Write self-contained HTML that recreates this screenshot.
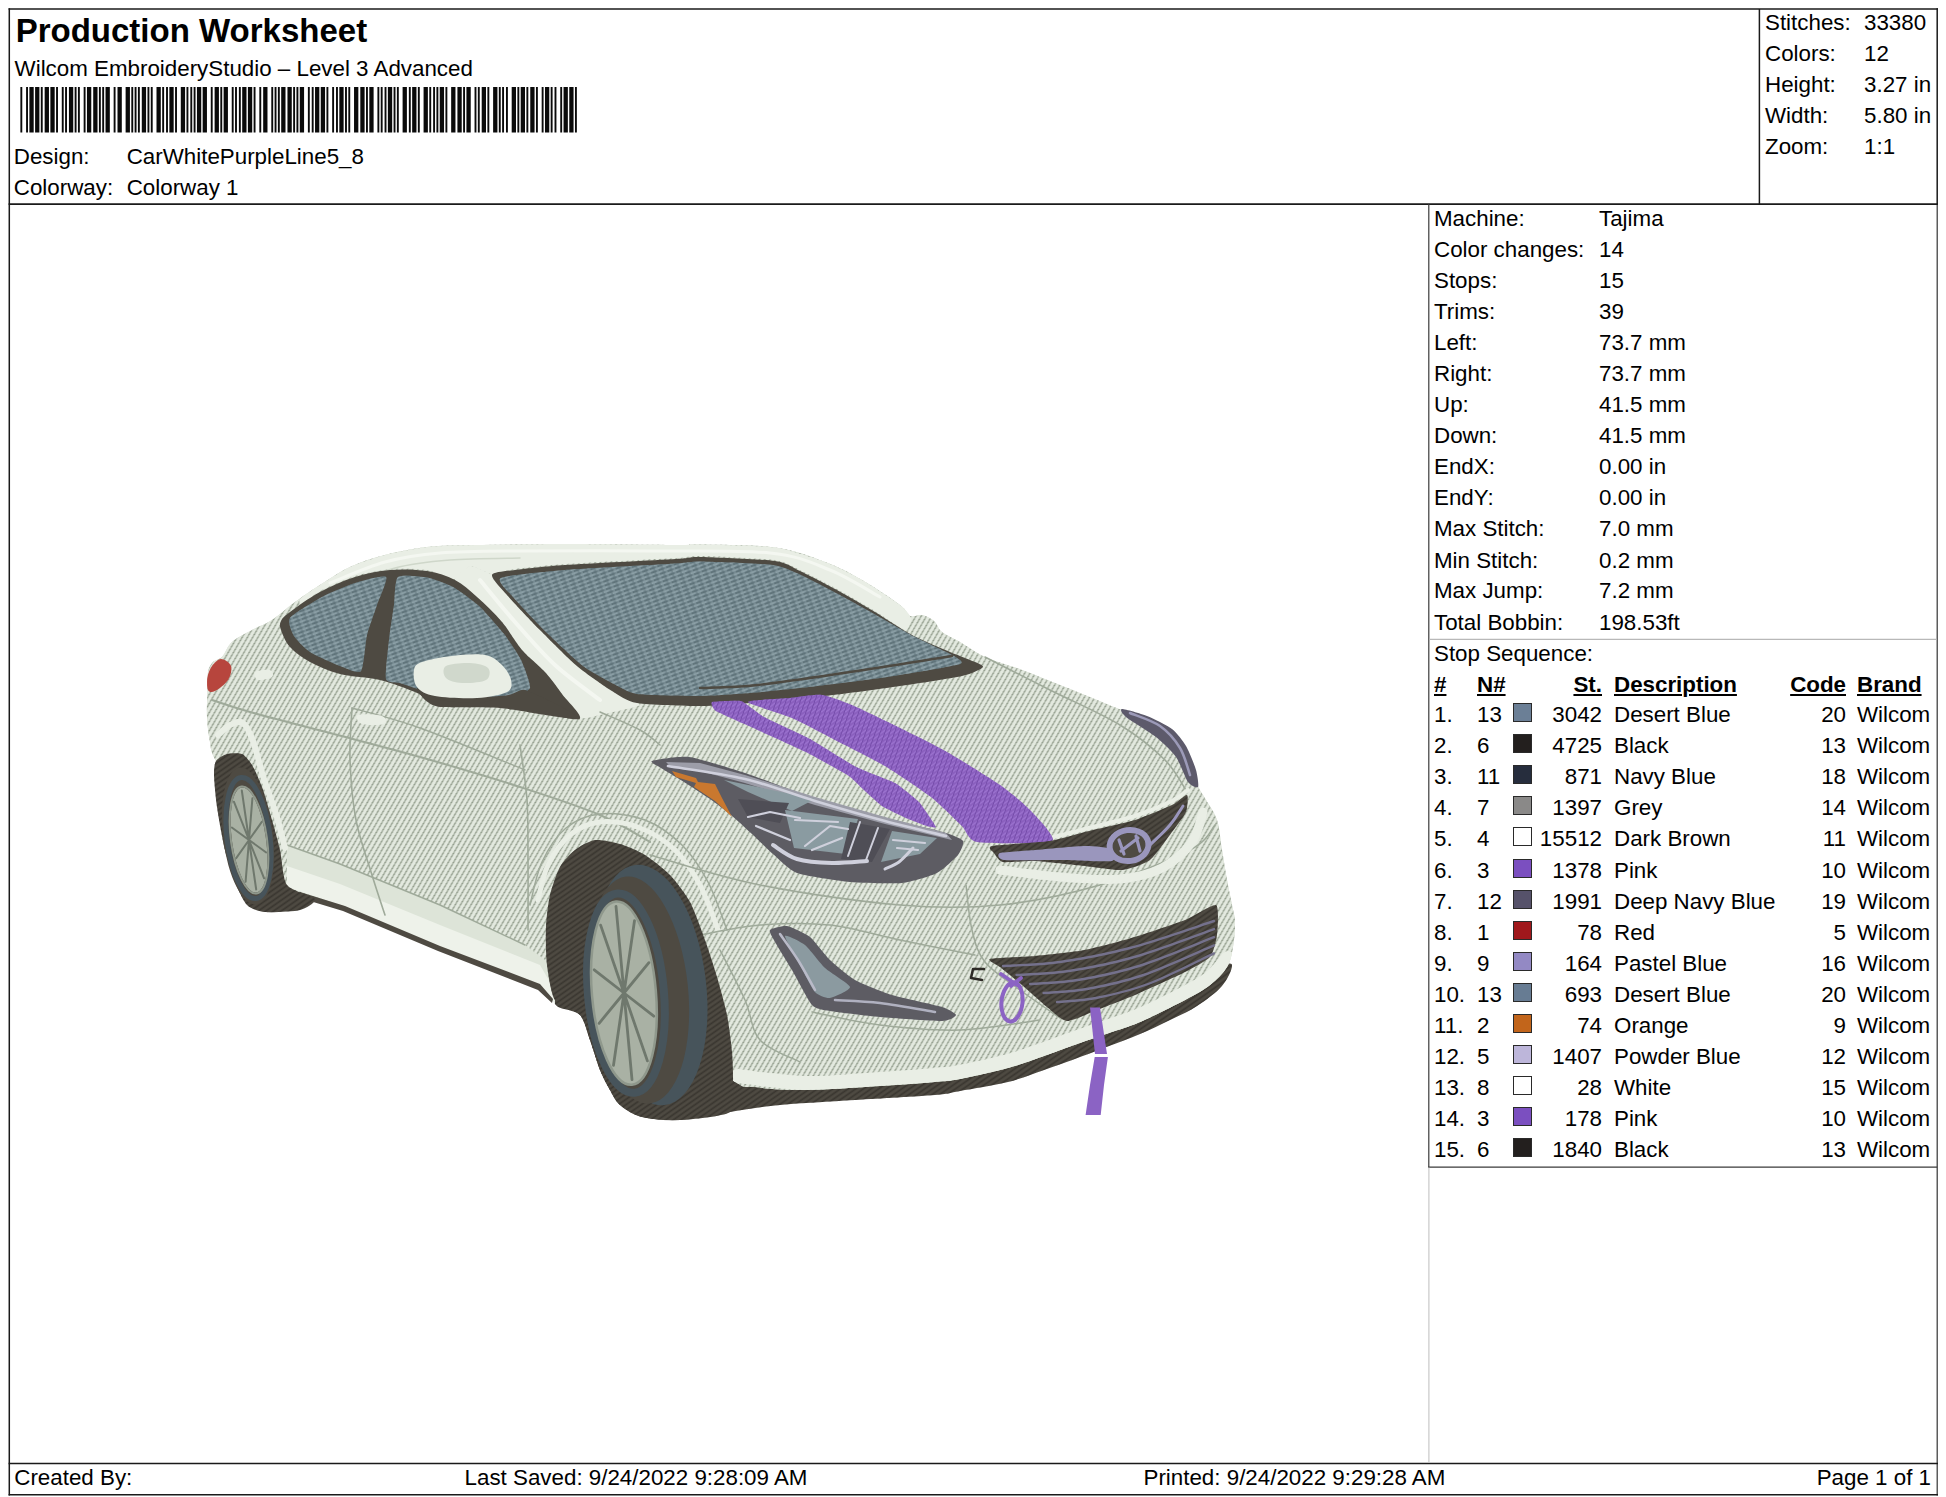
<!DOCTYPE html><html><head><meta charset="utf-8"><title>Production Worksheet</title><style>
html,body{margin:0;padding:0;background:#fff;}
body{width:1946px;height:1497px;position:relative;overflow:hidden;font-family:"Liberation Sans",Arial,sans-serif;color:#000;font-size:22.35px;}
.l{position:absolute;background:#222;}
.g{position:absolute;background:#c8c8c8;}
.t{position:absolute;white-space:nowrap;line-height:24px;height:24px;}
.r{text-align:right;}
.b{font-weight:bold;text-decoration:underline;text-decoration-thickness:2px;text-underline-offset:2px;}
.sw{position:absolute;width:17.6px;height:17px;border:1px solid #2a2a2a;}
</style></head><body>
<svg style="position:absolute;left:0;top:0" width="1946" height="1497" viewBox="0 0 1946 1497"><line x1="8.6" y1="9" x2="1938" y2="9" stroke="#1a1a1a" stroke-width="1.5"/><line x1="9.3" y1="8.3" x2="9.3" y2="1495.4" stroke="#1a1a1a" stroke-width="1.5"/><line x1="1937.2" y1="8.3" x2="1937.2" y2="204.1" stroke="#1a1a1a" stroke-width="1.5"/><line x1="1937.2" y1="204.1" x2="1937.2" y2="1495.4" stroke="#333" stroke-width="1.2"/><line x1="8.6" y1="1494.7" x2="1938" y2="1494.7" stroke="#1a1a1a" stroke-width="1.5"/><line x1="8.6" y1="204.1" x2="1938" y2="204.1" stroke="#1a1a1a" stroke-width="1.6"/><line x1="1759.4" y1="9" x2="1759.4" y2="204.1" stroke="#1a1a1a" stroke-width="1.5"/><line x1="8.6" y1="1463.5" x2="1938" y2="1463.5" stroke="#1a1a1a" stroke-width="1.6"/><line x1="1428.8" y1="204.1" x2="1428.8" y2="1167.6" stroke="#3a3a3a" stroke-width="1.2"/><line x1="1428.2" y1="1167.1" x2="1937.2" y2="1167.1" stroke="#3a3a3a" stroke-width="1.2"/><line x1="1428.9" y1="1167.6" x2="1428.9" y2="1463" stroke="#c4c4c4" stroke-width="1.1"/><line x1="1429.4" y1="639.4" x2="1936.6" y2="639.4" stroke="#b8b8b8" stroke-width="1.1"/></svg>
<div class="t" style="left:15.7px;top:12.6px;font-size:33px;font-weight:bold;line-height:36px;height:36px">Production Worksheet</div>
<div class="t " style="left:14.6px;top:56.6px;">Wilcom EmbroideryStudio – Level 3 Advanced</div>
<svg style="position:absolute;left:0;top:86.7px" width="600" height="46" viewBox="0 0 600 46" fill="#0a0a0a"><rect x="20.38" y="0" width="1.89" height="45.5"/><rect x="26.09" y="0" width="1.89" height="45.5"/><rect x="29.39" y="0" width="4.30" height="45.5"/><rect x="35.10" y="0" width="4.30" height="45.5"/><rect x="40.81" y="0" width="1.89" height="45.5"/><rect x="44.66" y="0" width="4.30" height="45.5"/><rect x="50.37" y="0" width="4.30" height="45.5"/><rect x="56.08" y="0" width="1.89" height="45.5"/><rect x="61.79" y="0" width="1.89" height="45.5"/><rect x="65.09" y="0" width="1.89" height="45.5"/><rect x="68.94" y="0" width="4.30" height="45.5"/><rect x="74.65" y="0" width="1.89" height="45.5"/><rect x="77.95" y="0" width="1.89" height="45.5"/><rect x="83.66" y="0" width="1.89" height="45.5"/><rect x="86.96" y="0" width="4.30" height="45.5"/><rect x="93.22" y="0" width="4.30" height="45.5"/><rect x="98.93" y="0" width="1.89" height="45.5"/><rect x="102.23" y="0" width="1.89" height="45.5"/><rect x="105.53" y="0" width="4.30" height="45.5"/><rect x="113.65" y="0" width="1.89" height="45.5"/><rect x="117.50" y="0" width="4.30" height="45.5"/><rect x="125.62" y="0" width="4.30" height="45.5"/><rect x="131.33" y="0" width="1.89" height="45.5"/><rect x="134.63" y="0" width="1.89" height="45.5"/><rect x="137.93" y="0" width="1.89" height="45.5"/><rect x="141.78" y="0" width="4.30" height="45.5"/><rect x="147.49" y="0" width="1.89" height="45.5"/><rect x="150.79" y="0" width="1.89" height="45.5"/><rect x="156.50" y="0" width="4.30" height="45.5"/><rect x="162.21" y="0" width="1.89" height="45.5"/><rect x="166.06" y="0" width="1.89" height="45.5"/><rect x="169.36" y="0" width="4.30" height="45.5"/><rect x="175.07" y="0" width="1.89" height="45.5"/><rect x="180.78" y="0" width="4.30" height="45.5"/><rect x="186.49" y="0" width="1.89" height="45.5"/><rect x="190.34" y="0" width="1.89" height="45.5"/><rect x="193.64" y="0" width="1.89" height="45.5"/><rect x="196.94" y="0" width="4.30" height="45.5"/><rect x="202.65" y="0" width="4.30" height="45.5"/><rect x="210.77" y="0" width="1.89" height="45.5"/><rect x="214.62" y="0" width="4.30" height="45.5"/><rect x="220.33" y="0" width="1.89" height="45.5"/><rect x="223.63" y="0" width="4.30" height="45.5"/><rect x="231.75" y="0" width="1.89" height="45.5"/><rect x="235.05" y="0" width="1.89" height="45.5"/><rect x="238.90" y="0" width="1.89" height="45.5"/><rect x="242.20" y="0" width="4.30" height="45.5"/><rect x="247.91" y="0" width="4.30" height="45.5"/><rect x="253.62" y="0" width="1.89" height="45.5"/><rect x="259.33" y="0" width="1.89" height="45.5"/><rect x="263.18" y="0" width="4.30" height="45.5"/><rect x="271.30" y="0" width="1.89" height="45.5"/><rect x="274.60" y="0" width="1.89" height="45.5"/><rect x="277.90" y="0" width="1.89" height="45.5"/><rect x="281.20" y="0" width="4.30" height="45.5"/><rect x="287.46" y="0" width="4.30" height="45.5"/><rect x="293.17" y="0" width="1.89" height="45.5"/><rect x="296.47" y="0" width="1.89" height="45.5"/><rect x="299.77" y="0" width="4.30" height="45.5"/><rect x="307.89" y="0" width="1.89" height="45.5"/><rect x="311.74" y="0" width="1.89" height="45.5"/><rect x="315.04" y="0" width="4.30" height="45.5"/><rect x="320.75" y="0" width="4.30" height="45.5"/><rect x="326.46" y="0" width="1.89" height="45.5"/><rect x="332.17" y="0" width="1.89" height="45.5"/><rect x="336.02" y="0" width="1.89" height="45.5"/><rect x="339.32" y="0" width="4.30" height="45.5"/><rect x="345.03" y="0" width="1.89" height="45.5"/><rect x="348.33" y="0" width="1.89" height="45.5"/><rect x="354.04" y="0" width="4.30" height="45.5"/><rect x="360.30" y="0" width="4.30" height="45.5"/><rect x="366.01" y="0" width="1.89" height="45.5"/><rect x="369.31" y="0" width="4.30" height="45.5"/><rect x="377.43" y="0" width="1.89" height="45.5"/><rect x="380.73" y="0" width="1.89" height="45.5"/><rect x="384.58" y="0" width="1.89" height="45.5"/><rect x="387.88" y="0" width="4.30" height="45.5"/><rect x="393.59" y="0" width="1.89" height="45.5"/><rect x="396.89" y="0" width="1.89" height="45.5"/><rect x="402.60" y="0" width="4.30" height="45.5"/><rect x="408.86" y="0" width="1.89" height="45.5"/><rect x="412.16" y="0" width="4.30" height="45.5"/><rect x="417.87" y="0" width="1.89" height="45.5"/><rect x="423.58" y="0" width="4.30" height="45.5"/><rect x="429.29" y="0" width="1.89" height="45.5"/><rect x="433.14" y="0" width="1.89" height="45.5"/><rect x="436.44" y="0" width="1.89" height="45.5"/><rect x="439.74" y="0" width="4.30" height="45.5"/><rect x="445.45" y="0" width="1.89" height="45.5"/><rect x="451.16" y="0" width="4.30" height="45.5"/><rect x="457.42" y="0" width="4.30" height="45.5"/><rect x="463.13" y="0" width="1.89" height="45.5"/><rect x="466.43" y="0" width="4.30" height="45.5"/><rect x="474.55" y="0" width="1.89" height="45.5"/><rect x="477.85" y="0" width="1.89" height="45.5"/><rect x="481.70" y="0" width="4.30" height="45.5"/><rect x="487.41" y="0" width="1.89" height="45.5"/><rect x="493.12" y="0" width="4.30" height="45.5"/><rect x="498.83" y="0" width="1.89" height="45.5"/><rect x="502.13" y="0" width="1.89" height="45.5"/><rect x="505.98" y="0" width="1.89" height="45.5"/><rect x="511.69" y="0" width="4.30" height="45.5"/><rect x="517.40" y="0" width="1.89" height="45.5"/><rect x="520.70" y="0" width="4.30" height="45.5"/><rect x="526.41" y="0" width="1.89" height="45.5"/><rect x="530.26" y="0" width="4.30" height="45.5"/><rect x="535.97" y="0" width="1.89" height="45.5"/><rect x="541.68" y="0" width="1.89" height="45.5"/><rect x="544.98" y="0" width="4.30" height="45.5"/><rect x="550.69" y="0" width="1.89" height="45.5"/><rect x="554.54" y="0" width="1.89" height="45.5"/><rect x="560.25" y="0" width="1.89" height="45.5"/><rect x="563.55" y="0" width="4.30" height="45.5"/><rect x="569.26" y="0" width="4.30" height="45.5"/><rect x="574.97" y="0" width="1.89" height="45.5"/></svg>
<div class="t " style="left:13.8px;top:144.6px;">Design:</div>
<div class="t " style="left:126.7px;top:144.6px;">CarWhitePurpleLine5_8</div>
<div class="t " style="left:13.8px;top:175.6px;">Colorway:</div>
<div class="t " style="left:126.7px;top:175.6px;">Colorway 1</div>
<div class="t " style="left:1765px;top:10.6px;">Stitches:</div>
<div class="t " style="left:1864px;top:10.6px;">33380</div>
<div class="t " style="left:1765px;top:41.6px;">Colors:</div>
<div class="t " style="left:1864px;top:41.6px;">12</div>
<div class="t " style="left:1765px;top:72.6px;">Height:</div>
<div class="t " style="left:1864px;top:72.6px;">3.27 in</div>
<div class="t " style="left:1765px;top:103.6px;">Width:</div>
<div class="t " style="left:1864px;top:103.6px;">5.80 in</div>
<div class="t " style="left:1765px;top:134.6px;">Zoom:</div>
<div class="t " style="left:1864px;top:134.6px;">1:1</div>
<div class="t " style="left:1434px;top:206.6px;">Machine:</div>
<div class="t " style="left:1599px;top:206.6px;">Tajima</div>
<div class="t " style="left:1434px;top:237.6px;">Color changes:</div>
<div class="t " style="left:1599px;top:237.6px;">14</div>
<div class="t " style="left:1434px;top:268.6px;">Stops:</div>
<div class="t " style="left:1599px;top:268.6px;">15</div>
<div class="t " style="left:1434px;top:299.6px;">Trims:</div>
<div class="t " style="left:1599px;top:299.6px;">39</div>
<div class="t " style="left:1434px;top:330.6px;">Left:</div>
<div class="t " style="left:1599px;top:330.6px;">73.7 mm</div>
<div class="t " style="left:1434px;top:361.6px;">Right:</div>
<div class="t " style="left:1599px;top:361.6px;">73.7 mm</div>
<div class="t " style="left:1434px;top:392.6px;">Up:</div>
<div class="t " style="left:1599px;top:392.6px;">41.5 mm</div>
<div class="t " style="left:1434px;top:423.6px;">Down:</div>
<div class="t " style="left:1599px;top:423.6px;">41.5 mm</div>
<div class="t " style="left:1434px;top:454.6px;">EndX:</div>
<div class="t " style="left:1599px;top:454.6px;">0.00 in</div>
<div class="t " style="left:1434px;top:485.6px;">EndY:</div>
<div class="t " style="left:1599px;top:485.6px;">0.00 in</div>
<div class="t " style="left:1434px;top:516.6px;">Max Stitch:</div>
<div class="t " style="left:1599px;top:516.6px;">7.0 mm</div>
<div class="t " style="left:1434px;top:548.6px;">Min Stitch:</div>
<div class="t " style="left:1599px;top:548.6px;">0.2 mm</div>
<div class="t " style="left:1434px;top:578.6px;">Max Jump:</div>
<div class="t " style="left:1599px;top:578.6px;">7.2 mm</div>
<div class="t " style="left:1434px;top:610.6px;">Total Bobbin:</div>
<div class="t " style="left:1599px;top:610.6px;">198.53ft</div>
<div class="t " style="left:1434px;top:641.6px;">Stop Sequence:</div>
<div class="t b" style="left:1434px;top:672.6px;">#</div>
<div class="t b" style="left:1477px;top:672.6px;">N#</div>
<div class="t r b" style="right:344px;top:672.6px;">St.</div>
<div class="t b" style="left:1614px;top:672.6px;">Description</div>
<div class="t r b" style="right:100px;top:672.6px;">Code</div>
<div class="t b" style="left:1857px;top:672.6px;">Brand</div>
<div class="t " style="left:1434px;top:702.6px;">1.</div>
<div class="t " style="left:1477px;top:702.6px;">13</div>
<div class="sw" style="left:1512.7px;top:702.7px;background:#6b7f96"></div>
<div class="t r " style="right:344px;top:702.6px;">3042</div>
<div class="t " style="left:1614px;top:702.6px;">Desert Blue</div>
<div class="t r " style="right:100px;top:702.6px;">20</div>
<div class="t " style="left:1857px;top:702.6px;">Wilcom</div>
<div class="t " style="left:1434px;top:733.6px;">2.</div>
<div class="t " style="left:1477px;top:733.6px;">6</div>
<div class="sw" style="left:1512.7px;top:733.7px;background:#231f1e"></div>
<div class="t r " style="right:344px;top:733.6px;">4725</div>
<div class="t " style="left:1614px;top:733.6px;">Black</div>
<div class="t r " style="right:100px;top:733.6px;">13</div>
<div class="t " style="left:1857px;top:733.6px;">Wilcom</div>
<div class="t " style="left:1434px;top:764.6px;">3.</div>
<div class="t " style="left:1477px;top:764.6px;">11</div>
<div class="sw" style="left:1512.7px;top:764.7px;background:#262d3d"></div>
<div class="t r " style="right:344px;top:764.6px;">871</div>
<div class="t " style="left:1614px;top:764.6px;">Navy Blue</div>
<div class="t r " style="right:100px;top:764.6px;">18</div>
<div class="t " style="left:1857px;top:764.6px;">Wilcom</div>
<div class="t " style="left:1434px;top:795.6px;">4.</div>
<div class="t " style="left:1477px;top:795.6px;">7</div>
<div class="sw" style="left:1512.7px;top:795.7px;background:#8a8988"></div>
<div class="t r " style="right:344px;top:795.6px;">1397</div>
<div class="t " style="left:1614px;top:795.6px;">Grey</div>
<div class="t r " style="right:100px;top:795.6px;">14</div>
<div class="t " style="left:1857px;top:795.6px;">Wilcom</div>
<div class="t " style="left:1434px;top:826.6px;">5.</div>
<div class="t " style="left:1477px;top:826.6px;">4</div>
<div class="sw" style="left:1512.7px;top:826.7px;background:#ffffff"></div>
<div class="t r " style="right:344px;top:826.6px;">15512</div>
<div class="t " style="left:1614px;top:826.6px;">Dark Brown</div>
<div class="t r " style="right:100px;top:826.6px;">11</div>
<div class="t " style="left:1857px;top:826.6px;">Wilcom</div>
<div class="t " style="left:1434px;top:858.6px;">6.</div>
<div class="t " style="left:1477px;top:858.6px;">3</div>
<div class="sw" style="left:1512.7px;top:858.7px;background:#7b4fc0"></div>
<div class="t r " style="right:344px;top:858.6px;">1378</div>
<div class="t " style="left:1614px;top:858.6px;">Pink</div>
<div class="t r " style="right:100px;top:858.6px;">10</div>
<div class="t " style="left:1857px;top:858.6px;">Wilcom</div>
<div class="t " style="left:1434px;top:889.6px;">7.</div>
<div class="t " style="left:1477px;top:889.6px;">12</div>
<div class="sw" style="left:1512.7px;top:889.7px;background:#56526a"></div>
<div class="t r " style="right:344px;top:889.6px;">1991</div>
<div class="t " style="left:1614px;top:889.6px;">Deep Navy Blue</div>
<div class="t r " style="right:100px;top:889.6px;">19</div>
<div class="t " style="left:1857px;top:889.6px;">Wilcom</div>
<div class="t " style="left:1434px;top:920.6px;">8.</div>
<div class="t " style="left:1477px;top:920.6px;">1</div>
<div class="sw" style="left:1512.7px;top:920.7px;background:#a0181c"></div>
<div class="t r " style="right:344px;top:920.6px;">78</div>
<div class="t " style="left:1614px;top:920.6px;">Red</div>
<div class="t r " style="right:100px;top:920.6px;">5</div>
<div class="t " style="left:1857px;top:920.6px;">Wilcom</div>
<div class="t " style="left:1434px;top:951.6px;">9.</div>
<div class="t " style="left:1477px;top:951.6px;">9</div>
<div class="sw" style="left:1512.7px;top:951.7px;background:#9389c4"></div>
<div class="t r " style="right:344px;top:951.6px;">164</div>
<div class="t " style="left:1614px;top:951.6px;">Pastel Blue</div>
<div class="t r " style="right:100px;top:951.6px;">16</div>
<div class="t " style="left:1857px;top:951.6px;">Wilcom</div>
<div class="t " style="left:1434px;top:982.6px;">10.</div>
<div class="t " style="left:1477px;top:982.6px;">13</div>
<div class="sw" style="left:1512.7px;top:982.7px;background:#677c93"></div>
<div class="t r " style="right:344px;top:982.6px;">693</div>
<div class="t " style="left:1614px;top:982.6px;">Desert Blue</div>
<div class="t r " style="right:100px;top:982.6px;">20</div>
<div class="t " style="left:1857px;top:982.6px;">Wilcom</div>
<div class="t " style="left:1434px;top:1013.6px;">11.</div>
<div class="t " style="left:1477px;top:1013.6px;">2</div>
<div class="sw" style="left:1512.7px;top:1013.7px;background:#c2651b"></div>
<div class="t r " style="right:344px;top:1013.6px;">74</div>
<div class="t " style="left:1614px;top:1013.6px;">Orange</div>
<div class="t r " style="right:100px;top:1013.6px;">9</div>
<div class="t " style="left:1857px;top:1013.6px;">Wilcom</div>
<div class="t " style="left:1434px;top:1044.6px;">12.</div>
<div class="t " style="left:1477px;top:1044.6px;">5</div>
<div class="sw" style="left:1512.7px;top:1044.7px;background:#bdb6da"></div>
<div class="t r " style="right:344px;top:1044.6px;">1407</div>
<div class="t " style="left:1614px;top:1044.6px;">Powder Blue</div>
<div class="t r " style="right:100px;top:1044.6px;">12</div>
<div class="t " style="left:1857px;top:1044.6px;">Wilcom</div>
<div class="t " style="left:1434px;top:1075.6px;">13.</div>
<div class="t " style="left:1477px;top:1075.6px;">8</div>
<div class="sw" style="left:1512.7px;top:1075.7px;background:#ffffff"></div>
<div class="t r " style="right:344px;top:1075.6px;">28</div>
<div class="t " style="left:1614px;top:1075.6px;">White</div>
<div class="t r " style="right:100px;top:1075.6px;">15</div>
<div class="t " style="left:1857px;top:1075.6px;">Wilcom</div>
<div class="t " style="left:1434px;top:1106.6px;">14.</div>
<div class="t " style="left:1477px;top:1106.6px;">3</div>
<div class="sw" style="left:1512.7px;top:1106.7px;background:#7b4fc0"></div>
<div class="t r " style="right:344px;top:1106.6px;">178</div>
<div class="t " style="left:1614px;top:1106.6px;">Pink</div>
<div class="t r " style="right:100px;top:1106.6px;">10</div>
<div class="t " style="left:1857px;top:1106.6px;">Wilcom</div>
<div class="t " style="left:1434px;top:1137.6px;">15.</div>
<div class="t " style="left:1477px;top:1137.6px;">6</div>
<div class="sw" style="left:1512.7px;top:1137.7px;background:#231f1e"></div>
<div class="t r " style="right:344px;top:1137.6px;">1840</div>
<div class="t " style="left:1614px;top:1137.6px;">Black</div>
<div class="t r " style="right:100px;top:1137.6px;">13</div>
<div class="t " style="left:1857px;top:1137.6px;">Wilcom</div>
<div class="t " style="left:14.3px;top:1465.6px;">Created By:</div>
<div class="t " style="left:464.6px;top:1465.6px;">Last Saved: 9/24/2022 9:28:09 AM</div>
<div class="t " style="left:1143.5px;top:1465.6px;">Printed: 9/24/2022 9:29:28 AM</div>
<div class="t r " style="right:15px;top:1465.6px;">Page 1 of 1</div>
<svg style="position:absolute;left:0;top:0" width="1946" height="1497" viewBox="0 0 1946 1497">
<defs>
<pattern id="st" width="5.25" height="6" patternUnits="userSpaceOnUse" patternTransform="skewX(-30)"><rect width="5.25" height="6" fill="#e3e9df"/><rect x="0.4" width="1.6" height="6" fill="#b0baab"/><circle cx="1.2" cy="1.5" r="0.9" fill="#929c8c"/><circle cx="1.2" cy="4.5" r="0.9" fill="#929c8c"/></pattern>
<pattern id="gl" width="8" height="4" patternUnits="userSpaceOnUse" patternTransform="rotate(-20)"><path d="M0,1.1 L8,1.1" stroke="#52666d" stroke-width="1.5" stroke-dasharray="5.6 2.4"/><path d="M0,3.1 L8,3.1" stroke="#9cb0b6" stroke-width="1.1" stroke-dasharray="5.6 2.4" stroke-dashoffset="3"/></pattern>
<pattern id="dk" width="5.5" height="4.4" patternUnits="userSpaceOnUse" patternTransform="rotate(-35)"><path d="M0,1.2 L5.5,1.2" stroke="#25221e" stroke-width="1.7"/></pattern>
<pattern id="pu" width="4.8" height="5.4" patternUnits="userSpaceOnUse" patternTransform="skewX(-20)"><path d="M0.6,4.4 L3.8,1.0" stroke="#a27ad6" stroke-width="1.5" stroke-linecap="round"/><path d="M4.4,0 L4.4,5.4" stroke="#6a429f" stroke-width="1.0"/></pattern>
<clipPath id="bodyclip"><path d="M222.0,657.0 C225.2,653.7 227.0,646.5 232.0,642.0 C237.0,637.5 245.3,633.7 252.0,630.0 C258.7,626.3 264.8,624.7 272.0,620.0 C279.2,615.3 287.0,607.8 295.0,602.0 C303.0,596.2 310.8,590.8 320.0,585.0 C329.2,579.2 339.2,572.0 350.0,567.0 C360.8,562.0 372.2,558.3 385.0,555.0 C397.8,551.7 411.7,548.7 427.0,547.0 C442.3,545.3 454.0,545.5 477.0,545.0 C500.0,544.5 531.8,544.0 565.0,544.0 C598.2,544.0 653.5,544.9 676.0,545.0 C698.5,545.1 683.5,544.1 700.0,544.5 C716.5,544.9 754.2,544.6 775.0,547.5 C795.8,550.4 810.5,556.6 825.0,562.0 C839.5,567.4 849.5,572.8 862.0,580.0 C874.5,587.2 892.0,599.0 900.0,605.0 C908.0,611.0 906.3,614.3 910.0,616.0 C913.7,617.7 918.0,614.2 922.0,615.0 C926.0,615.8 930.7,618.2 934.0,621.0 C937.3,623.8 937.7,628.5 942.0,632.0 C946.3,635.5 952.8,637.8 960.0,642.0 C967.2,646.2 974.7,652.3 985.0,657.0 C995.3,661.7 1009.5,665.3 1022.0,670.0 C1034.5,674.7 1047.5,680.0 1060.0,685.0 C1072.5,690.0 1086.7,695.8 1097.0,700.0 C1107.3,704.2 1113.7,707.2 1122.0,710.0 C1130.3,712.8 1138.7,713.7 1147.0,717.0 C1155.3,720.3 1165.7,725.0 1172.0,730.0 C1178.3,735.0 1181.2,740.3 1185.0,747.0 C1188.8,753.7 1192.8,763.5 1195.0,770.0 C1197.2,776.5 1196.2,781.0 1198.0,786.0 C1199.8,791.0 1202.8,794.3 1206.0,800.0 C1209.2,805.7 1214.3,811.7 1217.0,820.0 C1219.7,828.3 1220.3,840.0 1222.0,850.0 C1223.7,860.0 1225.3,870.8 1227.0,880.0 C1228.7,889.2 1230.7,898.0 1232.0,905.0 C1233.3,912.0 1234.8,915.0 1235.0,922.0 C1235.2,929.0 1234.3,939.5 1233.0,947.0 C1231.7,954.5 1230.8,960.7 1227.0,967.0 C1223.2,973.3 1217.0,979.5 1210.0,985.0 C1203.0,990.5 1196.7,993.8 1185.0,1000.0 C1173.3,1006.2 1152.7,1016.5 1140.0,1022.0 C1127.3,1027.5 1119.0,1029.5 1109.0,1033.0 C1099.0,1036.5 1090.8,1039.2 1080.0,1043.0 C1069.2,1046.8 1056.0,1051.8 1044.0,1056.0 C1032.0,1060.2 1022.0,1064.2 1008.0,1068.0 C994.0,1071.8 972.2,1076.7 960.0,1079.0 C947.8,1081.3 948.3,1080.8 935.0,1082.0 C921.7,1083.2 901.7,1084.7 880.0,1086.0 C858.3,1087.3 825.8,1089.8 805.0,1090.0 C784.2,1090.2 767.2,1088.7 755.0,1087.0 C742.8,1085.3 749.5,1091.2 732.0,1080.0 C714.5,1068.8 677.0,1035.0 650.0,1020.0 C623.0,1005.0 586.2,993.2 570.0,990.0 C553.8,986.8 558.0,1001.8 553.0,1001.0 C548.0,1000.2 550.5,990.7 540.0,985.0 C529.5,979.3 506.7,973.3 490.0,967.0 C473.3,960.7 456.7,953.7 440.0,947.0 C423.3,940.3 406.7,934.0 390.0,927.0 C373.3,920.0 357.2,911.7 340.0,905.0 C322.8,898.3 302.0,901.2 287.0,887.0 C272.0,872.8 261.8,841.0 250.0,820.0 C238.2,799.0 222.7,774.0 216.0,761.0 C209.3,748.0 211.5,749.3 210.0,742.0 C208.5,734.7 207.4,725.7 207.0,717.0 C206.6,708.3 207.3,697.5 207.5,690.0 C207.7,682.5 207.1,676.7 208.0,672.0 C208.9,667.3 210.7,664.5 213.0,662.0 C215.3,659.5 218.8,660.3 222.0,657.0 Z"/></clipPath>
</defs>
<path d="M555.0,1000.0 C551.7,1010.8 574.2,1008.3 580.0,1015.0 C585.8,1021.7 586.7,1030.8 590.0,1040.0 C593.3,1049.2 596.7,1061.7 600.0,1070.0 C603.3,1078.3 606.7,1084.2 610.0,1090.0 C613.3,1095.8 614.7,1100.5 620.0,1105.0 C625.3,1109.5 632.0,1114.5 642.0,1117.0 C652.0,1119.5 665.3,1120.8 680.0,1120.0 C694.7,1119.2 713.3,1114.5 730.0,1112.0 C746.7,1109.5 759.2,1107.0 780.0,1105.0 C800.8,1103.0 829.2,1101.7 855.0,1100.0 C880.8,1098.3 917.5,1096.5 935.0,1095.0 C952.5,1093.5 947.8,1093.2 960.0,1091.0 C972.2,1088.8 994.0,1085.5 1008.0,1082.0 C1022.0,1078.5 1032.0,1074.2 1044.0,1070.0 C1056.0,1065.8 1069.2,1061.0 1080.0,1057.0 C1090.8,1053.0 1099.0,1049.8 1109.0,1046.0 C1119.0,1042.2 1129.8,1038.3 1140.0,1034.0 C1150.2,1029.7 1160.5,1024.7 1170.0,1020.0 C1179.5,1015.3 1188.3,1011.7 1197.0,1006.0 C1205.7,1000.3 1216.2,992.7 1222.0,986.0 C1227.8,979.3 1232.0,969.3 1232.0,966.0 C1232.0,962.7 1229.8,962.8 1222.0,966.0 C1214.2,969.2 1203.7,976.8 1185.0,985.0 C1166.3,993.2 1139.2,1005.0 1110.0,1015.0 C1080.8,1025.0 1048.3,1036.7 1010.0,1045.0 C971.7,1053.3 921.7,1060.8 880.0,1065.0 C838.3,1069.2 790.0,1080.8 760.0,1070.0 C730.0,1059.2 726.7,1020.0 700.0,1000.0 C673.3,980.0 624.2,950.0 600.0,950.0 C575.8,950.0 558.3,989.2 555.0,1000.0 Z" fill="#4e4a42" />
<path d="M555.0,1000.0 C551.7,1010.8 574.2,1008.3 580.0,1015.0 C585.8,1021.7 586.7,1030.8 590.0,1040.0 C593.3,1049.2 596.7,1061.7 600.0,1070.0 C603.3,1078.3 606.7,1084.2 610.0,1090.0 C613.3,1095.8 614.7,1100.5 620.0,1105.0 C625.3,1109.5 632.0,1114.5 642.0,1117.0 C652.0,1119.5 665.3,1120.8 680.0,1120.0 C694.7,1119.2 713.3,1114.5 730.0,1112.0 C746.7,1109.5 759.2,1107.0 780.0,1105.0 C800.8,1103.0 829.2,1101.7 855.0,1100.0 C880.8,1098.3 917.5,1096.5 935.0,1095.0 C952.5,1093.5 947.8,1093.2 960.0,1091.0 C972.2,1088.8 994.0,1085.5 1008.0,1082.0 C1022.0,1078.5 1032.0,1074.2 1044.0,1070.0 C1056.0,1065.8 1069.2,1061.0 1080.0,1057.0 C1090.8,1053.0 1099.0,1049.8 1109.0,1046.0 C1119.0,1042.2 1129.8,1038.3 1140.0,1034.0 C1150.2,1029.7 1160.5,1024.7 1170.0,1020.0 C1179.5,1015.3 1188.3,1011.7 1197.0,1006.0 C1205.7,1000.3 1216.2,992.7 1222.0,986.0 C1227.8,979.3 1232.0,969.3 1232.0,966.0 C1232.0,962.7 1229.8,962.8 1222.0,966.0 C1214.2,969.2 1203.7,976.8 1185.0,985.0 C1166.3,993.2 1139.2,1005.0 1110.0,1015.0 C1080.8,1025.0 1048.3,1036.7 1010.0,1045.0 C971.7,1053.3 921.7,1060.8 880.0,1065.0 C838.3,1069.2 790.0,1080.8 760.0,1070.0 C730.0,1059.2 726.7,1020.0 700.0,1000.0 C673.3,980.0 624.2,950.0 600.0,950.0 C575.8,950.0 558.3,989.2 555.0,1000.0 Z" fill="url(#dk)" opacity="0.5"/>
<path d="M222.0,657.0 C225.2,653.7 227.0,646.5 232.0,642.0 C237.0,637.5 245.3,633.7 252.0,630.0 C258.7,626.3 264.8,624.7 272.0,620.0 C279.2,615.3 287.0,607.8 295.0,602.0 C303.0,596.2 310.8,590.8 320.0,585.0 C329.2,579.2 339.2,572.0 350.0,567.0 C360.8,562.0 372.2,558.3 385.0,555.0 C397.8,551.7 411.7,548.7 427.0,547.0 C442.3,545.3 454.0,545.5 477.0,545.0 C500.0,544.5 531.8,544.0 565.0,544.0 C598.2,544.0 653.5,544.9 676.0,545.0 C698.5,545.1 683.5,544.1 700.0,544.5 C716.5,544.9 754.2,544.6 775.0,547.5 C795.8,550.4 810.5,556.6 825.0,562.0 C839.5,567.4 849.5,572.8 862.0,580.0 C874.5,587.2 892.0,599.0 900.0,605.0 C908.0,611.0 906.3,614.3 910.0,616.0 C913.7,617.7 918.0,614.2 922.0,615.0 C926.0,615.8 930.7,618.2 934.0,621.0 C937.3,623.8 937.7,628.5 942.0,632.0 C946.3,635.5 952.8,637.8 960.0,642.0 C967.2,646.2 974.7,652.3 985.0,657.0 C995.3,661.7 1009.5,665.3 1022.0,670.0 C1034.5,674.7 1047.5,680.0 1060.0,685.0 C1072.5,690.0 1086.7,695.8 1097.0,700.0 C1107.3,704.2 1113.7,707.2 1122.0,710.0 C1130.3,712.8 1138.7,713.7 1147.0,717.0 C1155.3,720.3 1165.7,725.0 1172.0,730.0 C1178.3,735.0 1181.2,740.3 1185.0,747.0 C1188.8,753.7 1192.8,763.5 1195.0,770.0 C1197.2,776.5 1196.2,781.0 1198.0,786.0 C1199.8,791.0 1202.8,794.3 1206.0,800.0 C1209.2,805.7 1214.3,811.7 1217.0,820.0 C1219.7,828.3 1220.3,840.0 1222.0,850.0 C1223.7,860.0 1225.3,870.8 1227.0,880.0 C1228.7,889.2 1230.7,898.0 1232.0,905.0 C1233.3,912.0 1234.8,915.0 1235.0,922.0 C1235.2,929.0 1234.3,939.5 1233.0,947.0 C1231.7,954.5 1230.8,960.7 1227.0,967.0 C1223.2,973.3 1217.0,979.5 1210.0,985.0 C1203.0,990.5 1196.7,993.8 1185.0,1000.0 C1173.3,1006.2 1152.7,1016.5 1140.0,1022.0 C1127.3,1027.5 1119.0,1029.5 1109.0,1033.0 C1099.0,1036.5 1090.8,1039.2 1080.0,1043.0 C1069.2,1046.8 1056.0,1051.8 1044.0,1056.0 C1032.0,1060.2 1022.0,1064.2 1008.0,1068.0 C994.0,1071.8 972.2,1076.7 960.0,1079.0 C947.8,1081.3 948.3,1080.8 935.0,1082.0 C921.7,1083.2 901.7,1084.7 880.0,1086.0 C858.3,1087.3 825.8,1089.8 805.0,1090.0 C784.2,1090.2 767.2,1088.7 755.0,1087.0 C742.8,1085.3 749.5,1091.2 732.0,1080.0 C714.5,1068.8 677.0,1035.0 650.0,1020.0 C623.0,1005.0 586.2,993.2 570.0,990.0 C553.8,986.8 558.0,1001.8 553.0,1001.0 C548.0,1000.2 550.5,990.7 540.0,985.0 C529.5,979.3 506.7,973.3 490.0,967.0 C473.3,960.7 456.7,953.7 440.0,947.0 C423.3,940.3 406.7,934.0 390.0,927.0 C373.3,920.0 357.2,911.7 340.0,905.0 C322.8,898.3 302.0,901.2 287.0,887.0 C272.0,872.8 261.8,841.0 250.0,820.0 C238.2,799.0 222.7,774.0 216.0,761.0 C209.3,748.0 211.5,749.3 210.0,742.0 C208.5,734.7 207.4,725.7 207.0,717.0 C206.6,708.3 207.3,697.5 207.5,690.0 C207.7,682.5 207.1,676.7 208.0,672.0 C208.9,667.3 210.7,664.5 213.0,662.0 C215.3,659.5 218.8,660.3 222.0,657.0 Z" fill="#d6ded2" />
<path d="M222.0,657.0 C225.2,653.7 227.0,646.5 232.0,642.0 C237.0,637.5 245.3,633.7 252.0,630.0 C258.7,626.3 264.8,624.7 272.0,620.0 C279.2,615.3 287.0,607.8 295.0,602.0 C303.0,596.2 310.8,590.8 320.0,585.0 C329.2,579.2 339.2,572.0 350.0,567.0 C360.8,562.0 372.2,558.3 385.0,555.0 C397.8,551.7 411.7,548.7 427.0,547.0 C442.3,545.3 454.0,545.5 477.0,545.0 C500.0,544.5 531.8,544.0 565.0,544.0 C598.2,544.0 653.5,544.9 676.0,545.0 C698.5,545.1 683.5,544.1 700.0,544.5 C716.5,544.9 754.2,544.6 775.0,547.5 C795.8,550.4 810.5,556.6 825.0,562.0 C839.5,567.4 849.5,572.8 862.0,580.0 C874.5,587.2 892.0,599.0 900.0,605.0 C908.0,611.0 906.3,614.3 910.0,616.0 C913.7,617.7 918.0,614.2 922.0,615.0 C926.0,615.8 930.7,618.2 934.0,621.0 C937.3,623.8 937.7,628.5 942.0,632.0 C946.3,635.5 952.8,637.8 960.0,642.0 C967.2,646.2 974.7,652.3 985.0,657.0 C995.3,661.7 1009.5,665.3 1022.0,670.0 C1034.5,674.7 1047.5,680.0 1060.0,685.0 C1072.5,690.0 1086.7,695.8 1097.0,700.0 C1107.3,704.2 1113.7,707.2 1122.0,710.0 C1130.3,712.8 1138.7,713.7 1147.0,717.0 C1155.3,720.3 1165.7,725.0 1172.0,730.0 C1178.3,735.0 1181.2,740.3 1185.0,747.0 C1188.8,753.7 1192.8,763.5 1195.0,770.0 C1197.2,776.5 1196.2,781.0 1198.0,786.0 C1199.8,791.0 1202.8,794.3 1206.0,800.0 C1209.2,805.7 1214.3,811.7 1217.0,820.0 C1219.7,828.3 1220.3,840.0 1222.0,850.0 C1223.7,860.0 1225.3,870.8 1227.0,880.0 C1228.7,889.2 1230.7,898.0 1232.0,905.0 C1233.3,912.0 1234.8,915.0 1235.0,922.0 C1235.2,929.0 1234.3,939.5 1233.0,947.0 C1231.7,954.5 1230.8,960.7 1227.0,967.0 C1223.2,973.3 1217.0,979.5 1210.0,985.0 C1203.0,990.5 1196.7,993.8 1185.0,1000.0 C1173.3,1006.2 1152.7,1016.5 1140.0,1022.0 C1127.3,1027.5 1119.0,1029.5 1109.0,1033.0 C1099.0,1036.5 1090.8,1039.2 1080.0,1043.0 C1069.2,1046.8 1056.0,1051.8 1044.0,1056.0 C1032.0,1060.2 1022.0,1064.2 1008.0,1068.0 C994.0,1071.8 972.2,1076.7 960.0,1079.0 C947.8,1081.3 948.3,1080.8 935.0,1082.0 C921.7,1083.2 901.7,1084.7 880.0,1086.0 C858.3,1087.3 825.8,1089.8 805.0,1090.0 C784.2,1090.2 767.2,1088.7 755.0,1087.0 C742.8,1085.3 749.5,1091.2 732.0,1080.0 C714.5,1068.8 677.0,1035.0 650.0,1020.0 C623.0,1005.0 586.2,993.2 570.0,990.0 C553.8,986.8 558.0,1001.8 553.0,1001.0 C548.0,1000.2 550.5,990.7 540.0,985.0 C529.5,979.3 506.7,973.3 490.0,967.0 C473.3,960.7 456.7,953.7 440.0,947.0 C423.3,940.3 406.7,934.0 390.0,927.0 C373.3,920.0 357.2,911.7 340.0,905.0 C322.8,898.3 302.0,901.2 287.0,887.0 C272.0,872.8 261.8,841.0 250.0,820.0 C238.2,799.0 222.7,774.0 216.0,761.0 C209.3,748.0 211.5,749.3 210.0,742.0 C208.5,734.7 207.4,725.7 207.0,717.0 C206.6,708.3 207.3,697.5 207.5,690.0 C207.7,682.5 207.1,676.7 208.0,672.0 C208.9,667.3 210.7,664.5 213.0,662.0 C215.3,659.5 218.8,660.3 222.0,657.0 Z" fill="url(#st)" opacity="1"/>
<path d="M300.0,599.0 C301.8,597.1 315.0,588.2 320.0,585.0 C325.0,581.8 343.5,570.0 350.0,567.0 C356.5,564.0 377.3,557.0 385.0,555.0 C392.7,553.0 417.8,548.0 427.0,547.0 C436.2,546.0 463.2,545.3 477.0,545.0 C490.8,544.7 545.1,544.0 565.0,544.0 C584.9,544.0 662.5,545.0 676.0,545.0 C689.5,545.0 690.1,544.2 700.0,544.5 C709.9,544.8 762.5,545.8 775.0,547.5 C787.5,549.2 816.3,558.8 825.0,562.0 C833.7,565.2 854.5,575.7 862.0,580.0 C869.5,584.3 895.1,601.2 900.0,605.0 C904.9,608.8 910.5,615.5 911.0,618.0 C911.5,620.5 908.6,630.7 905.0,630.0 C901.4,629.3 881.8,615.1 875.0,611.0 C868.2,606.9 844.5,593.1 837.0,589.0 C829.5,584.9 806.2,572.9 800.0,570.0 C793.8,567.1 785.0,561.4 775.0,560.0 C765.0,558.6 709.9,556.2 700.0,556.0 C690.1,555.8 689.5,557.2 676.0,558.0 C662.5,558.8 581.1,562.9 565.0,564.0 C548.9,565.1 522.3,568.0 515.0,569.0 C507.7,570.0 496.5,574.3 492.0,574.0 C487.5,573.7 473.7,565.5 470.0,566.0 C466.3,566.5 459.3,578.6 455.0,579.0 C450.7,579.4 433.5,571.0 427.0,570.0 C420.5,569.0 397.2,568.4 390.0,569.0 C382.8,569.6 362.0,573.8 355.0,576.0 C348.0,578.2 325.3,588.2 320.0,591.0 C314.7,593.8 304.0,603.2 302.0,604.0 C300.0,604.8 298.2,600.9 300.0,599.0 Z" fill="#e9eee5" />
<path d="M330.0,583.0 C339.2,579.5 366.7,567.0 385.0,562.0 C403.3,557.0 417.5,554.8 440.0,553.0 C462.5,551.2 485.0,551.3 520.0,551.0 C555.0,550.7 608.3,550.7 650.0,551.0 C691.7,551.3 740.0,549.8 770.0,553.0 C800.0,556.2 811.7,562.7 830.0,570.0 C848.3,577.3 871.7,592.5 880.0,597.0" fill="none" stroke="#f4f7f1" stroke-width="3" stroke-linecap="round" stroke-linejoin="round" />
<path d="M345.0,588.0 C353.3,584.7 377.5,572.7 395.0,568.0 C412.5,563.3 429.2,561.7 450.0,560.0 C470.8,558.3 508.3,558.3 520.0,558.0" fill="none" stroke="#cfd7ca" stroke-width="1.5" stroke-linecap="round" stroke-linejoin="round" />
<path d="M455.0,580.0 C455.6,582.5 473.2,593.6 477.0,597.0 C480.8,600.4 498.4,617.8 502.0,622.0 C505.6,626.2 518.6,646.0 522.0,650.0 C525.4,654.0 541.8,668.5 545.0,672.0 C548.2,675.5 559.2,690.3 562.0,694.0 C564.8,697.7 576.6,716.4 580.0,718.0 C583.4,719.6 599.2,715.0 604.0,714.0 C608.8,713.0 639.4,706.8 640.0,705.0 C640.6,703.2 617.0,694.1 612.0,691.0 C607.0,687.9 582.8,670.9 577.0,666.0 C571.2,661.1 545.6,635.7 540.0,630.0 C534.4,624.3 510.8,599.4 507.0,595.0 C503.2,590.6 495.0,577.3 492.0,575.0 C489.0,572.7 473.0,565.6 470.0,566.0 C467.0,566.4 454.4,577.5 455.0,580.0 Z" fill="#e9eee5" />
<path d="M480.0,580.0 C485.8,587.0 502.5,607.8 515.0,622.0 C527.5,636.2 540.8,652.0 555.0,665.0 C569.2,678.0 592.5,694.2 600.0,700.0" fill="none" stroke="#f4f7f1" stroke-width="4" stroke-linecap="round" stroke-linejoin="round" />
<path d="M287.0,845.0 L340.0,864.0 L440.0,905.0 L525.0,945.0 L549.0,963.0 L555.0,1004.0 L540.0,985.0 L440.0,947.0 L340.0,905.0 L287.0,887.0 Z" fill="#dde4d8" />
<path d="M287.0,866.0 L340.0,884.0 L440.0,925.0 L540.0,965.0 L551.0,984.0 L555.0,1004.0 L540.0,985.0 L440.0,947.0 L340.0,905.0 L287.0,887.0 Z" fill="#eef2ea" />
<path d="M287,845 L340,864 L440,905 L525,945" fill="none" stroke="#9faa9a" stroke-width="1.4" stroke-linecap="round" stroke-linejoin="round" />
<path d="M218.0,735.0 C220.0,733.3 225.8,727.0 230.0,725.0 C234.2,723.0 239.2,720.3 243.0,723.0 C246.8,725.7 249.7,732.2 253.0,741.0 C256.3,749.8 259.2,763.8 263.0,776.0 C266.8,788.2 272.3,802.0 276.0,814.0 C279.7,826.0 283.5,842.3 285.0,848.0" fill="none" stroke="#e9eee5" stroke-width="6" stroke-linecap="round" stroke-linejoin="round" />
<path d="M212.0,700.0 C218.3,702.0 230.3,706.5 250.0,712.0 C269.7,717.5 301.7,725.5 330.0,733.0 C358.3,740.5 388.3,748.0 420.0,757.0 C451.7,766.0 490.0,777.3 520.0,787.0 C550.0,796.7 578.3,805.8 600.0,815.0 C621.7,824.2 641.7,837.5 650.0,842.0" fill="none" stroke="#9faa9a" stroke-width="2" stroke-linecap="round" stroke-linejoin="round" />
<path d="M352.0,708.0 C351.7,716.7 349.3,741.3 350.0,760.0 C350.7,778.7 352.3,800.8 356.0,820.0 C359.7,839.2 367.2,859.2 372.0,875.0 C376.8,890.8 382.8,908.3 385.0,915.0" fill="none" stroke="#9faa9a" stroke-width="1.6" stroke-linecap="round" stroke-linejoin="round" />
<path d="M520.0,745.0 C521.2,754.2 525.7,780.8 527.0,800.0 C528.3,819.2 527.8,838.3 528.0,860.0 C528.2,881.7 528.0,918.3 528.0,930.0" fill="none" stroke="#9faa9a" stroke-width="1.6" stroke-linecap="round" stroke-linejoin="round" />
<path d="M352.0,708.0 C363.3,711.3 391.2,717.7 420.0,728.0 C448.8,738.3 507.5,763.0 525.0,770.0" fill="none" stroke="#9faa9a" stroke-width="1.4" stroke-linecap="round" stroke-linejoin="round" />
<path d="M255.0,672.0 C257.0,670.3 267.2,669.2 270.0,670.0 C272.8,670.8 274.0,675.3 272.0,677.0 C270.0,678.7 260.8,680.8 258.0,680.0 C255.2,679.2 253.0,673.7 255.0,672.0 Z" fill="#e9eee5" />
<path d="M358.0,715.0 C361.3,713.7 377.7,714.5 382.0,716.0 C386.3,717.5 387.3,722.7 384.0,724.0 C380.7,725.3 366.3,725.5 362.0,724.0 C357.7,722.5 354.7,716.3 358.0,715.0 Z" fill="#e9eee5" />
<path d="M538.0,900.0 C539.7,894.2 542.7,875.8 548.0,865.0 C553.3,854.2 561.3,842.2 570.0,835.0 C578.7,827.8 588.3,823.2 600.0,822.0 C611.7,820.8 627.5,823.3 640.0,828.0 C652.5,832.7 665.0,840.5 675.0,850.0 C685.0,859.5 692.8,871.7 700.0,885.0 C707.2,898.3 715.0,922.5 718.0,930.0" fill="none" stroke="#e9eee5" stroke-width="5" stroke-linecap="round" stroke-linejoin="round" />
<path d="M530.0,905.0 C532.0,897.8 536.0,874.8 542.0,862.0 C548.0,849.2 556.3,836.0 566.0,828.0 C575.7,820.0 586.8,815.3 600.0,814.0 C613.2,812.7 631.3,814.8 645.0,820.0 C658.7,825.2 671.5,834.7 682.0,845.0 C692.5,855.3 700.5,867.8 708.0,882.0 C715.5,896.2 723.8,922.0 727.0,930.0" fill="none" stroke="#9faa9a" stroke-width="1.5" stroke-linecap="round" stroke-linejoin="round" />
<path d="M985.0,657.0 C995.8,662.5 1027.5,678.7 1050.0,690.0 C1072.5,701.3 1100.8,713.3 1120.0,725.0 C1139.2,736.7 1153.8,748.8 1165.0,760.0 C1176.2,771.2 1183.3,786.7 1187.0,792.0" fill="none" stroke="#9faa9a" stroke-width="1.5" stroke-linecap="round" stroke-linejoin="round" />
<path d="M600.0,712.0 C606.7,715.0 630.0,724.5 640.0,730.0 C650.0,735.5 656.7,742.5 660.0,745.0" fill="none" stroke="#9faa9a" stroke-width="1.5" stroke-linecap="round" stroke-linejoin="round" />
<path d="M650.0,855.0 C668.3,860.0 718.3,876.7 760.0,885.0 C801.7,893.3 860.0,901.7 900.0,905.0 C940.0,908.3 966.7,908.3 1000.0,905.0 C1033.3,901.7 1068.3,894.2 1100.0,885.0 C1131.7,875.8 1170.8,860.0 1190.0,850.0 C1209.2,840.0 1210.8,829.2 1215.0,825.0" fill="none" stroke="#9faa9a" stroke-width="1.6" stroke-linecap="round" stroke-linejoin="round" />
<path d="M738.0,1076.0 C749.2,1077.2 781.3,1082.5 805.0,1083.0 C828.7,1083.5 858.3,1080.3 880.0,1079.0 C901.7,1077.7 921.7,1076.2 935.0,1075.0 C948.3,1073.8 947.8,1074.3 960.0,1072.0 C972.2,1069.7 994.0,1064.8 1008.0,1061.0 C1022.0,1057.2 1032.0,1053.2 1044.0,1049.0 C1056.0,1044.8 1069.2,1039.8 1080.0,1036.0 C1090.8,1032.2 1099.0,1029.5 1109.0,1026.0 C1119.0,1022.5 1127.3,1020.5 1140.0,1015.0 C1152.7,1009.5 1173.3,999.2 1185.0,993.0 C1196.7,986.8 1202.8,983.8 1210.0,978.0 C1217.2,972.2 1225.0,961.3 1228.0,958.0" fill="none" stroke="#e9eee5" stroke-width="14" stroke-linecap="round" stroke-linejoin="round" clip-path="url(#bodyclip)"/>
<path d="M700.0,935.0 C710.0,933.3 738.3,926.7 760.0,925.0 C781.7,923.3 806.7,922.5 830.0,925.0 C853.3,927.5 875.8,935.0 900.0,940.0 C924.2,945.0 962.5,952.5 975.0,955.0" fill="none" stroke="#9faa9a" stroke-width="1.5" stroke-linecap="round" stroke-linejoin="round" />
<path d="M812.0,1012.0 C823.3,1014.2 855.3,1022.0 880.0,1025.0 C904.7,1028.0 933.3,1030.8 960.0,1030.0 C986.7,1029.2 1026.7,1021.7 1040.0,1020.0" fill="none" stroke="#9faa9a" stroke-width="1.5" stroke-linecap="round" stroke-linejoin="round" />
<path d="M966.0,885.0 C967.0,892.5 968.8,917.2 972.0,930.0 C975.2,942.8 977.0,952.0 985.0,962.0 C993.0,972.0 1007.5,980.7 1020.0,990.0 C1032.5,999.3 1053.3,1013.3 1060.0,1018.0" fill="none" stroke="#9faa9a" stroke-width="1.5" stroke-linecap="round" stroke-linejoin="round" />
<path d="M720.0,950.0 C724.2,958.3 738.3,985.0 745.0,1000.0 C751.7,1015.0 750.8,1029.7 760.0,1040.0 C769.2,1050.3 793.3,1058.3 800.0,1062.0" fill="none" stroke="#9faa9a" stroke-width="1.5" stroke-linecap="round" stroke-linejoin="round" />
<path d="M1000.0,870.0 C1010.0,871.2 1040.0,875.5 1060.0,877.0 C1080.0,878.5 1103.0,880.5 1120.0,879.0 C1137.0,877.5 1150.0,874.2 1162.0,868.0 C1174.0,861.8 1185.2,851.3 1192.0,842.0 C1198.8,832.7 1201.2,817.0 1203.0,812.0" fill="none" stroke="#e9eee5" stroke-width="9" stroke-linecap="round" stroke-linejoin="round" />
<path d="M1050.0,838.0 C1055.8,836.5 1070.8,832.7 1085.0,829.0 C1099.2,825.3 1120.5,820.7 1135.0,816.0 C1149.5,811.3 1163.2,805.3 1172.0,801.0 C1180.8,796.7 1185.3,791.8 1188.0,790.0" fill="none" stroke="#e9eee5" stroke-width="4" stroke-linecap="round" stroke-linejoin="round" />
<path d="M300.0,892.0 L345.0,906.0 L440.0,946.0 L540.0,984.0 L553.0,999.0 L552.0,1003.0 L538.0,990.0 L438.0,951.0 L343.0,911.0 L300.0,898.0 Z" fill="#4e4a42" />
<path d="M281.0,621.0 C282.5,618.0 283.5,616.8 290.0,612.0 C296.5,607.2 309.2,597.8 320.0,592.0 C330.8,586.2 343.3,580.7 355.0,577.0 C366.7,573.3 378.0,571.0 390.0,570.0 C402.0,569.0 416.2,569.3 427.0,571.0 C437.8,572.7 446.7,575.7 455.0,580.0 C463.3,584.3 469.2,590.0 477.0,597.0 C484.8,604.0 494.5,613.2 502.0,622.0 C509.5,630.8 514.8,641.7 522.0,650.0 C529.2,658.3 538.3,664.7 545.0,672.0 C551.7,679.3 556.2,686.3 562.0,694.0 C567.8,701.7 581.7,714.5 580.0,718.0 C578.3,721.5 562.8,717.0 552.0,715.0 C541.2,713.0 529.5,707.8 515.0,706.0 C500.5,704.2 479.2,705.0 465.0,704.0 C450.8,703.0 438.3,702.0 430.0,700.0 C421.7,698.0 423.3,695.3 415.0,692.0 C406.7,688.7 392.5,683.0 380.0,680.0 C367.5,677.0 351.7,677.0 340.0,674.0 C328.3,671.0 318.3,666.5 310.0,662.0 C301.7,657.5 294.8,652.3 290.0,647.0 C285.2,641.7 282.5,634.3 281.0,630.0 C279.5,625.7 279.5,624.0 281.0,621.0 Z" fill="#4e4a42" />
<path d="M290.0,618.0 C292.8,614.1 315.5,600.5 322.0,597.0 C328.5,593.5 348.6,585.0 355.0,583.0 C361.4,581.0 383.8,574.8 386.0,577.0 C388.2,579.2 378.9,599.2 377.0,605.0 C375.1,610.8 368.6,628.4 367.0,635.0 C365.4,641.6 363.7,667.9 361.0,671.0 C358.3,674.1 345.1,667.9 340.0,666.0 C334.9,664.1 314.6,655.0 310.0,652.0 C305.4,649.0 296.0,639.4 294.0,636.0 C292.0,632.6 287.2,621.9 290.0,618.0 Z" fill="#768a91" />
<path d="M398.0,577.0 C401.3,574.2 421.5,576.5 427.0,577.5 C432.5,578.5 447.8,584.1 453.0,587.0 C458.2,589.9 473.9,601.3 479.0,606.0 C484.1,610.7 499.8,628.6 504.0,634.0 C508.2,639.4 518.4,654.6 521.0,660.0 C523.6,665.4 530.9,684.5 530.0,688.0 C529.1,691.5 518.0,694.1 512.0,695.0 C506.0,695.9 478.2,697.1 470.0,697.0 C461.8,696.9 435.5,694.9 430.0,694.0 C424.5,693.1 418.0,689.1 415.0,688.0 C412.0,686.9 402.9,683.9 400.0,683.0 C397.1,682.1 387.1,683.3 386.0,679.0 C384.9,674.7 388.2,647.4 389.0,640.0 C389.8,632.6 393.1,611.3 394.0,605.0 C394.9,598.7 394.7,579.8 398.0,577.0 Z" fill="#768a91" />
<path d="M492.0,575.0 C493.0,572.0 506.2,571.2 515.0,570.0 C523.8,568.8 545.7,566.3 565.0,565.0 C584.3,563.7 659.8,560.0 676.0,559.0 C692.2,558.0 688.1,556.8 700.0,557.0 C711.9,557.2 763.0,559.3 775.0,561.0 C787.0,562.7 792.6,567.5 800.0,571.0 C807.4,574.5 828.0,585.1 837.0,590.0 C846.0,594.9 866.0,606.6 875.0,612.0 C884.0,617.4 903.0,630.2 912.0,635.0 C921.0,639.8 943.0,649.0 950.0,652.0 C957.0,655.0 966.0,658.2 970.0,660.0 C974.0,661.8 984.0,665.1 983.0,667.0 C982.0,668.9 972.0,673.7 962.0,676.0 C952.0,678.3 916.4,683.6 900.0,686.0 C883.6,688.4 843.0,694.0 825.0,696.0 C807.0,698.0 765.0,701.8 750.0,703.0 C735.0,704.2 713.6,706.0 700.0,706.0 C686.4,706.0 647.6,704.8 637.0,703.0 C626.4,701.2 619.2,695.4 612.0,691.0 C604.8,686.6 585.6,673.3 577.0,666.0 C568.4,658.7 548.4,638.5 540.0,630.0 C531.6,621.5 512.8,601.6 507.0,595.0 C501.2,588.4 491.0,578.0 492.0,575.0 Z" fill="#4e4a42" />
<path d="M501.0,578.0 C506.2,575.3 547.5,571.5 565.0,570.0 C582.5,568.5 662.5,564.4 676.0,563.5 C689.5,562.6 690.3,561.4 700.0,561.5 C709.7,561.6 762.9,563.6 773.0,565.0 C783.1,566.4 794.5,572.1 801.0,575.0 C807.5,577.9 830.5,590.0 838.0,594.0 C845.5,598.0 868.5,610.8 876.0,615.0 C883.5,619.2 905.4,632.0 913.0,636.0 C920.6,640.0 947.3,652.2 952.0,655.0 C956.7,657.8 965.2,662.0 960.0,664.0 C954.8,666.0 911.0,673.2 900.0,675.0 C889.0,676.8 860.0,680.7 850.0,682.0 C840.0,683.3 810.0,686.9 800.0,688.0 C790.0,689.1 760.0,692.2 750.0,693.0 C740.0,693.8 711.3,695.9 700.0,696.0 C688.7,696.1 645.6,695.2 637.0,694.0 C628.4,692.8 619.4,686.8 614.0,684.0 C608.6,681.2 589.9,671.3 583.0,666.0 C576.1,660.7 552.0,637.9 545.0,631.0 C538.0,624.1 517.4,602.3 513.0,597.0 C508.6,591.7 495.8,580.7 501.0,578.0 Z" fill="#768a91" />
<path d="M290.0,618.0 C292.8,614.1 315.5,600.5 322.0,597.0 C328.5,593.5 348.6,585.0 355.0,583.0 C361.4,581.0 383.8,574.8 386.0,577.0 C388.2,579.2 378.9,599.2 377.0,605.0 C375.1,610.8 368.6,628.4 367.0,635.0 C365.4,641.6 363.7,667.9 361.0,671.0 C358.3,674.1 345.1,667.9 340.0,666.0 C334.9,664.1 314.6,655.0 310.0,652.0 C305.4,649.0 296.0,639.4 294.0,636.0 C292.0,632.6 287.2,621.9 290.0,618.0 Z" fill="url(#gl)" opacity="0.8"/>
<path d="M398.0,577.0 C401.3,574.2 421.5,576.5 427.0,577.5 C432.5,578.5 447.8,584.1 453.0,587.0 C458.2,589.9 473.9,601.3 479.0,606.0 C484.1,610.7 499.8,628.6 504.0,634.0 C508.2,639.4 518.4,654.6 521.0,660.0 C523.6,665.4 530.9,684.5 530.0,688.0 C529.1,691.5 518.0,694.1 512.0,695.0 C506.0,695.9 478.2,697.1 470.0,697.0 C461.8,696.9 435.5,694.9 430.0,694.0 C424.5,693.1 418.0,689.1 415.0,688.0 C412.0,686.9 402.9,683.9 400.0,683.0 C397.1,682.1 387.1,683.3 386.0,679.0 C384.9,674.7 388.2,647.4 389.0,640.0 C389.8,632.6 393.1,611.3 394.0,605.0 C394.9,598.7 394.7,579.8 398.0,577.0 Z" fill="url(#gl)" opacity="0.8"/>
<path d="M501.0,578.0 C506.2,575.3 547.5,571.5 565.0,570.0 C582.5,568.5 662.5,564.4 676.0,563.5 C689.5,562.6 690.3,561.4 700.0,561.5 C709.7,561.6 762.9,563.6 773.0,565.0 C783.1,566.4 794.5,572.1 801.0,575.0 C807.5,577.9 830.5,590.0 838.0,594.0 C845.5,598.0 868.5,610.8 876.0,615.0 C883.5,619.2 905.4,632.0 913.0,636.0 C920.6,640.0 947.3,652.2 952.0,655.0 C956.7,657.8 965.2,662.0 960.0,664.0 C954.8,666.0 911.0,673.2 900.0,675.0 C889.0,676.8 860.0,680.7 850.0,682.0 C840.0,683.3 810.0,686.9 800.0,688.0 C790.0,689.1 760.0,692.2 750.0,693.0 C740.0,693.8 711.3,695.9 700.0,696.0 C688.7,696.1 645.6,695.2 637.0,694.0 C628.4,692.8 619.4,686.8 614.0,684.0 C608.6,681.2 589.9,671.3 583.0,666.0 C576.1,660.7 552.0,637.9 545.0,631.0 C538.0,624.1 517.4,602.3 513.0,597.0 C508.6,591.7 495.8,580.7 501.0,578.0 Z" fill="url(#gl)" opacity="0.8"/>
<path d="M700.0,688.0 C709.7,687.5 731.8,687.8 758.0,685.0 C784.2,682.2 824.7,675.8 857.0,671.0 C889.3,666.2 936.2,658.5 952.0,656.0" fill="none" stroke="#4e4a42" stroke-width="2.5" stroke-linecap="round" stroke-linejoin="round" />
<path d="M417.0,688.0 C418.5,688.0 433.7,698.5 440.0,700.0 C446.3,701.5 472.8,703.6 480.0,703.0 C487.2,702.4 507.5,695.3 512.0,694.0 C516.5,692.7 520.2,688.8 525.0,690.0 C529.8,691.2 554.5,703.1 560.0,706.0 C565.5,708.9 580.8,718.0 580.0,719.0 C579.2,720.0 560.0,717.1 552.0,716.0 C544.0,714.9 511.2,708.9 500.0,708.0 C488.8,707.1 447.5,707.8 440.0,707.0 C432.5,706.2 427.3,701.9 425.0,700.0 C422.7,698.1 415.5,688.0 417.0,688.0 Z" fill="#4e4a42" />
<path d="M414.0,670.0 C414.8,665.8 415.7,664.3 422.0,662.0 C428.3,659.7 441.5,657.2 452.0,656.0 C462.5,654.8 476.7,653.5 485.0,655.0 C493.3,656.5 497.7,660.8 502.0,665.0 C506.3,669.2 510.2,675.5 511.0,680.0 C511.8,684.5 512.7,689.0 507.0,692.0 C501.3,695.0 489.0,697.3 477.0,698.0 C465.0,698.7 445.0,697.8 435.0,696.0 C425.0,694.2 420.5,691.3 417.0,687.0 C413.5,682.7 413.2,674.2 414.0,670.0 Z" fill="#e9eee5" />
<path d="M446.0,666.0 C450.0,663.5 463.0,662.7 470.0,663.0 C477.0,663.3 485.3,665.2 488.0,668.0 C490.7,670.8 490.3,677.5 486.0,680.0 C481.7,682.5 468.7,683.3 462.0,683.0 C455.3,682.7 448.7,680.8 446.0,678.0 C443.3,675.2 442.0,668.5 446.0,666.0 Z" fill="#d0d8cc" />
<path d="M748.0,702.0 C747.8,700.0 782.6,698.7 790.0,698.0 C797.4,697.3 815.6,694.2 822.0,695.0 C828.4,695.8 846.2,702.7 854.0,706.0 C861.8,709.3 890.7,723.4 900.0,728.0 C909.3,732.6 937.0,746.3 947.0,752.0 C957.0,757.7 991.7,779.2 1000.0,785.0 C1008.3,790.8 1024.8,804.4 1030.0,810.0 C1035.2,815.6 1057.3,837.8 1052.0,841.0 C1046.7,844.2 986.0,843.5 977.0,842.0 C968.0,840.5 966.6,830.5 962.0,826.0 C957.4,821.5 938.7,803.0 931.0,797.0 C923.3,791.0 894.2,771.5 885.0,766.0 C875.8,760.5 848.3,746.8 839.0,742.0 C829.7,737.2 801.1,722.0 792.0,718.0 C782.9,714.0 748.2,704.0 748.0,702.0 Z" fill="#8a5fbe" />
<path d="M712.0,702.0 C713.5,701.4 737.9,700.1 741.0,701.0 C744.1,701.9 759.9,714.7 764.0,717.0 C768.1,719.3 804.5,736.0 810.0,739.0 C815.5,742.0 850.9,764.4 856.0,767.0 C861.1,769.6 891.2,780.9 895.0,783.0 C898.8,785.1 916.5,799.4 919.0,802.0 C921.5,804.6 935.5,825.6 936.0,827.0 C936.5,828.4 928.8,826.5 927.0,826.0 C925.2,825.5 908.7,819.2 906.0,818.0 C903.3,816.8 884.5,807.7 882.0,806.0 C879.5,804.3 866.0,791.8 864.0,790.0 C862.0,788.2 852.5,778.3 849.0,776.0 C845.5,773.7 811.3,754.7 806.0,752.0 C800.7,749.3 765.4,733.5 760.0,731.0 C754.6,728.5 718.9,712.7 716.0,711.0 C713.1,709.3 710.5,702.6 712.0,702.0 Z" fill="#8a5fbe" />
<path d="M748.0,702.0 C747.8,700.0 782.6,698.7 790.0,698.0 C797.4,697.3 815.6,694.2 822.0,695.0 C828.4,695.8 846.2,702.7 854.0,706.0 C861.8,709.3 890.7,723.4 900.0,728.0 C909.3,732.6 937.0,746.3 947.0,752.0 C957.0,757.7 991.7,779.2 1000.0,785.0 C1008.3,790.8 1024.8,804.4 1030.0,810.0 C1035.2,815.6 1057.3,837.8 1052.0,841.0 C1046.7,844.2 986.0,843.5 977.0,842.0 C968.0,840.5 966.6,830.5 962.0,826.0 C957.4,821.5 938.7,803.0 931.0,797.0 C923.3,791.0 894.2,771.5 885.0,766.0 C875.8,760.5 848.3,746.8 839.0,742.0 C829.7,737.2 801.1,722.0 792.0,718.0 C782.9,714.0 748.2,704.0 748.0,702.0 Z" fill="url(#pu)" opacity="0.7"/>
<path d="M712.0,702.0 C713.5,701.4 737.9,700.1 741.0,701.0 C744.1,701.9 759.9,714.7 764.0,717.0 C768.1,719.3 804.5,736.0 810.0,739.0 C815.5,742.0 850.9,764.4 856.0,767.0 C861.1,769.6 891.2,780.9 895.0,783.0 C898.8,785.1 916.5,799.4 919.0,802.0 C921.5,804.6 935.5,825.6 936.0,827.0 C936.5,828.4 928.8,826.5 927.0,826.0 C925.2,825.5 908.7,819.2 906.0,818.0 C903.3,816.8 884.5,807.7 882.0,806.0 C879.5,804.3 866.0,791.8 864.0,790.0 C862.0,788.2 852.5,778.3 849.0,776.0 C845.5,773.7 811.3,754.7 806.0,752.0 C800.7,749.3 765.4,733.5 760.0,731.0 C754.6,728.5 718.9,712.7 716.0,711.0 C713.1,709.3 710.5,702.6 712.0,702.0 Z" fill="url(#pu)" opacity="0.7"/>
<path d="M652.0,761.0 C654.8,759.9 679.7,755.8 689.0,757.0 C698.3,758.2 734.2,769.5 745.0,773.0 C755.8,776.5 786.5,788.5 797.0,792.0 C807.5,795.5 839.5,805.0 850.0,808.0 C860.5,811.0 892.4,819.5 902.0,822.0 C911.6,824.5 939.9,831.1 946.0,833.0 C952.1,834.9 961.8,838.8 963.0,841.0 C964.2,843.2 960.6,851.8 958.0,855.0 C955.4,858.2 942.6,870.2 937.0,873.0 C931.4,875.8 910.7,882.1 902.0,883.0 C893.3,883.9 860.5,883.0 850.0,882.0 C839.5,881.0 804.7,875.8 797.0,873.0 C789.3,870.2 777.5,857.9 773.0,854.0 C768.5,850.1 756.2,837.9 752.0,834.0 C747.8,830.1 735.2,818.5 731.0,815.0 C726.8,811.5 714.7,802.3 710.0,799.0 C705.3,795.7 688.9,785.1 684.0,782.0 C679.1,778.9 664.2,770.1 661.0,768.0 C657.8,765.9 649.2,762.1 652.0,761.0 Z" fill="#5d5c63" />
<path d="M666.0,762.0 L700.0,763.0 L745.0,775.0 L815.0,797.0 L885.0,817.0 L946.0,833.0 L952.0,840.0 L885.0,824.0 L815.0,805.0 L745.0,783.0 L700.0,771.0 L672.0,768.0 Z" fill="#9c9da8" />
<path d="M724.0,780.0 L815.0,799.0 L792.0,811.0 L748.0,792.0 Z" fill="#8a9ba1" />
<path d="M738.0,799.0 L789.0,803.0 L780.0,823.0 L748.0,817.0 Z" fill="#4f4e56" />
<path d="M785.0,810.0 L858.0,819.0 L846.0,854.0 L794.0,848.0 Z" fill="#8a9ba1" />
<path d="M850.0,822.0 L890.0,829.0 L872.0,862.0 L841.0,859.0 Z" fill="#4f4e56" />
<path d="M892.0,831.0 L937.0,838.0 L920.0,854.0 L881.0,862.0 Z" fill="#8a9ba1" />
<path d="M668.0,766.0 C680.8,768.2 720.5,773.2 745.0,779.0 C769.5,784.8 791.7,794.0 815.0,801.0 C838.3,808.0 863.2,815.2 885.0,821.0 C906.8,826.8 935.8,833.5 946.0,836.0" fill="none" stroke="#cfd0dc" stroke-width="2.6" stroke-linecap="round" stroke-linejoin="round" />
<path d="M773.0,845.0 C777.0,847.3 787.2,856.0 797.0,859.0 C806.8,862.0 820.3,862.7 832.0,863.0 C843.7,863.3 861.2,861.3 867.0,861.0" fill="none" stroke="#cfd0dc" stroke-width="4" stroke-linecap="round" stroke-linejoin="round" />
<path d="M913.0,848.0 C910.7,850.3 903.7,858.5 899.0,862.0 C894.3,865.5 887.3,867.8 885.0,869.0" fill="none" stroke="#cfd0dc" stroke-width="3" stroke-linecap="round" stroke-linejoin="round" />
<path d="M748,817 L770,812 L800,818 M795,820 L838,822 M805,846 L830,826 L848,829 M812,850 L842,838 M756,826 L790,840 M893,840 L925,843 M897,848 L918,850" fill="none" stroke="#cfd0dc" stroke-width="2.2" stroke-linecap="round" stroke-linejoin="round" />
<path d="M860,822 L848,856 M878,828 L866,860" fill="none" stroke="#cfd0dc" stroke-width="2" stroke-linecap="round" stroke-linejoin="round" />
<path d="M672.0,771.0 L696.0,778.0 L698.0,782.0 L715.0,784.0 L722.0,798.0 L732.0,817.0 L715.0,801.0 L694.0,787.0 L696.0,783.0 L676.0,777.0 Z" fill="#c9782f" />
<path d="M992.0,846.0 C997.6,844.8 1040.7,842.4 1050.0,841.0 C1059.3,839.6 1076.5,834.1 1085.0,832.0 C1093.5,829.9 1126.3,822.7 1135.0,820.0 C1143.7,817.3 1166.8,807.5 1172.0,805.0 C1177.2,802.5 1185.6,794.3 1187.0,795.0 C1188.4,795.7 1187.5,808.3 1186.0,812.0 C1184.5,815.7 1175.6,827.2 1172.0,832.0 C1168.4,836.8 1155.0,856.2 1150.0,860.0 C1145.0,863.8 1128.5,869.4 1122.0,870.0 C1115.5,870.6 1093.7,866.9 1085.0,866.0 C1076.3,865.1 1043.2,861.4 1035.0,861.0 C1026.8,860.6 1007.1,862.8 1003.0,862.0 C998.9,861.2 995.1,854.6 994.0,853.0 C992.9,851.4 986.4,847.2 992.0,846.0 Z" fill="#4e4a42" />
<path d="M992.0,846.0 C997.6,844.8 1040.7,842.4 1050.0,841.0 C1059.3,839.6 1076.5,834.1 1085.0,832.0 C1093.5,829.9 1126.3,822.7 1135.0,820.0 C1143.7,817.3 1166.8,807.5 1172.0,805.0 C1177.2,802.5 1185.6,794.3 1187.0,795.0 C1188.4,795.7 1187.5,808.3 1186.0,812.0 C1184.5,815.7 1175.6,827.2 1172.0,832.0 C1168.4,836.8 1155.0,856.2 1150.0,860.0 C1145.0,863.8 1128.5,869.4 1122.0,870.0 C1115.5,870.6 1093.7,866.9 1085.0,866.0 C1076.3,865.1 1043.2,861.4 1035.0,861.0 C1026.8,860.6 1007.1,862.8 1003.0,862.0 C998.9,861.2 995.1,854.6 994.0,853.0 C992.9,851.4 986.4,847.2 992.0,846.0 Z" fill="url(#dk)" opacity="0.5"/>
<path d="M1000.0,853.0 C1003.1,852.0 1026.5,850.7 1035.0,850.0 C1043.5,849.3 1077.3,846.1 1085.0,846.0 C1092.7,845.9 1109.3,847.5 1112.0,849.0 C1114.7,850.5 1117.2,859.9 1112.0,861.0 C1106.8,862.1 1070.8,860.1 1060.0,860.0 C1049.2,859.9 1010.0,860.7 1004.0,860.0 C998.0,859.3 996.9,854.0 1000.0,853.0 Z" fill="#9a96bd" />
<path d="M1150.0,845.0 C1153.3,841.7 1164.5,831.5 1170.0,825.0 C1175.5,818.5 1180.8,809.2 1183.0,806.0" fill="none" stroke="#9a96bd" stroke-width="3" stroke-linecap="round" stroke-linejoin="round" />
<ellipse cx="1129" cy="845.5" rx="22.5" ry="18.5" fill="#9a96bd" transform="rotate(-8 1129 845.5)"/>
<ellipse cx="1129" cy="845.5" rx="16.5" ry="12.5" fill="#4e4a42" transform="rotate(-8 1129 845.5)"/>
<path d="M1119,840 L1124,854 M1136,836 L1140,851 M1121,851 L1138,838" fill="none" stroke="#9a96bd" stroke-width="3.2" stroke-linecap="round" stroke-linejoin="round" />
<path d="M1122.0,709.0 C1124.5,708.9 1141.0,713.6 1147.0,716.0 C1153.0,718.4 1167.3,725.4 1172.0,729.0 C1176.7,732.6 1183.1,741.1 1186.0,746.0 C1188.9,750.9 1194.6,765.1 1196.0,770.0 C1197.4,774.9 1199.0,785.6 1198.0,787.0 C1197.0,788.4 1190.6,785.6 1188.0,782.0 C1185.4,778.4 1179.8,762.4 1176.0,757.0 C1172.2,751.6 1162.0,741.8 1156.0,737.0 C1150.0,732.2 1130.1,720.4 1126.0,717.0 C1121.9,713.6 1119.5,709.1 1122.0,709.0 Z" fill="#5d5a6b" />
<path d="M1130.0,713.0 C1135.0,715.2 1151.7,720.2 1160.0,726.0 C1168.3,731.8 1175.0,739.8 1180.0,748.0 C1185.0,756.2 1188.3,770.5 1190.0,775.0" fill="none" stroke="#9c9ab8" stroke-width="2.5" stroke-linecap="round" stroke-linejoin="round" />
<path d="M990.0,959.0 C993.5,957.9 1025.5,956.9 1035.0,956.0 C1044.5,955.1 1075.0,951.9 1085.0,950.0 C1095.0,948.1 1125.0,940.0 1135.0,937.0 C1145.0,934.0 1176.9,923.2 1185.0,920.0 C1193.1,916.8 1212.8,903.5 1216.0,905.0 C1219.2,906.5 1217.6,929.8 1217.0,935.0 C1216.4,940.2 1213.2,953.3 1210.0,957.0 C1206.8,960.7 1192.5,968.2 1185.0,972.0 C1177.5,975.8 1143.8,991.2 1135.0,995.0 C1126.2,998.8 1103.8,1007.4 1097.0,1010.0 C1090.2,1012.6 1072.0,1021.3 1067.0,1021.0 C1062.0,1020.7 1051.5,1010.6 1047.0,1007.0 C1042.5,1003.4 1026.7,989.0 1022.0,985.0 C1017.3,981.0 1003.2,969.6 1000.0,967.0 C996.8,964.4 986.5,960.1 990.0,959.0 Z" fill="#4e4a42" />
<path d="M990.0,959.0 C993.5,957.9 1025.5,956.9 1035.0,956.0 C1044.5,955.1 1075.0,951.9 1085.0,950.0 C1095.0,948.1 1125.0,940.0 1135.0,937.0 C1145.0,934.0 1176.9,923.2 1185.0,920.0 C1193.1,916.8 1212.8,903.5 1216.0,905.0 C1219.2,906.5 1217.6,929.8 1217.0,935.0 C1216.4,940.2 1213.2,953.3 1210.0,957.0 C1206.8,960.7 1192.5,968.2 1185.0,972.0 C1177.5,975.8 1143.8,991.2 1135.0,995.0 C1126.2,998.8 1103.8,1007.4 1097.0,1010.0 C1090.2,1012.6 1072.0,1021.3 1067.0,1021.0 C1062.0,1020.7 1051.5,1010.6 1047.0,1007.0 C1042.5,1003.4 1026.7,989.0 1022.0,985.0 C1017.3,981.0 1003.2,969.6 1000.0,967.0 C996.8,964.4 986.5,960.1 990.0,959.0 Z" fill="url(#dk)" opacity="0.5"/>
<path d="M1003.0,966.0 C1012.5,965.3 1038.8,965.0 1060.0,962.0 C1081.2,959.0 1104.3,954.8 1130.0,948.0 C1155.7,941.2 1200.0,925.5 1214.0,921.0" fill="none" stroke="#74718c" stroke-width="2.4" stroke-linecap="round" stroke-linejoin="round" />
<path d="M1016.5,975.0 C1025.2,974.3 1049.3,974.0 1069.0,971.0 C1088.7,968.0 1110.3,964.0 1134.5,957.0 C1158.7,950.0 1200.8,933.8 1214.0,929.1" fill="none" stroke="#74718c" stroke-width="2.4" stroke-linecap="round" stroke-linejoin="round" />
<path d="M1030.0,984.0 C1038.0,983.3 1059.8,983.0 1078.0,980.0 C1096.2,977.0 1116.3,973.1 1139.0,966.0 C1161.7,958.9 1201.5,942.0 1214.0,937.2" fill="none" stroke="#74718c" stroke-width="2.4" stroke-linecap="round" stroke-linejoin="round" />
<path d="M1043.5,993.0 C1050.8,992.3 1070.3,992.0 1087.0,989.0 C1103.7,986.0 1122.3,982.3 1143.5,975.0 C1164.7,967.7 1202.2,950.2 1214.0,945.3" fill="none" stroke="#74718c" stroke-width="2.4" stroke-linecap="round" stroke-linejoin="round" />
<path d="M1057.0,1002.0 C1063.5,1001.3 1080.8,1001.0 1096.0,998.0 C1111.2,995.0 1128.3,991.4 1148.0,984.0 C1167.7,976.6 1203.0,958.5 1214.0,953.4" fill="none" stroke="#74718c" stroke-width="2.4" stroke-linecap="round" stroke-linejoin="round" />
<path d="M984,969 L973,969 L971,978 L982,980" fill="none" stroke="#2d2a26" stroke-width="2.5" stroke-linecap="round" stroke-linejoin="round" />
<path d="M770.0,930.0 C771.2,928.4 783.0,925.3 787.0,926.0 C791.0,926.7 805.7,933.6 810.0,937.0 C814.3,940.4 825.5,955.7 830.0,960.0 C834.5,964.3 848.8,976.5 855.0,980.0 C861.2,983.5 883.3,992.3 892.0,995.0 C900.7,997.7 935.6,1005.0 942.0,1007.0 C948.4,1009.0 956.0,1013.6 956.0,1015.0 C956.0,1016.4 949.6,1020.8 942.0,1021.0 C934.4,1021.2 891.2,1018.0 880.0,1017.0 C868.8,1016.0 836.8,1012.2 830.0,1011.0 C823.2,1009.8 815.8,1009.1 812.0,1005.0 C808.2,1000.9 795.7,976.3 792.0,970.0 C788.3,963.7 777.2,946.0 775.0,942.0 C772.8,938.0 768.8,931.6 770.0,930.0 Z" fill="#5d5c63" />
<path d="M785.0,936.0 C785.5,934.0 801.0,941.8 805.0,945.0 C809.0,948.2 820.5,963.8 825.0,968.0 C829.5,972.2 849.5,984.0 850.0,987.0 C850.5,990.0 833.5,997.5 830.0,998.0 C826.5,998.5 818.0,995.3 815.0,992.0 C812.0,988.7 803.0,970.6 800.0,965.0 C797.0,959.4 784.5,938.0 785.0,936.0 Z" fill="#8b9aa0" />
<path d="M780.0,934.0 C783.0,938.3 792.2,950.7 798.0,960.0 C803.8,969.3 812.2,985.0 815.0,990.0" fill="none" stroke="#b9bac8" stroke-width="2.5" stroke-linecap="round" stroke-linejoin="round" />
<path d="M835.0,1000.0 C842.5,1000.5 863.3,1001.0 880.0,1003.0 C896.7,1005.0 925.8,1010.5 935.0,1012.0" fill="none" stroke="#b0b1c0" stroke-width="2.5" stroke-linecap="round" stroke-linejoin="round" />
<path d="M216.0,761.0 C217.6,758.5 223.9,754.8 227.0,754.0 C230.1,753.2 239.0,752.7 242.0,754.0 C245.0,755.3 249.6,761.0 252.0,765.0 C254.4,769.0 259.6,780.4 262.0,787.0 C264.4,793.6 269.8,812.4 272.0,820.0 C274.2,827.6 278.2,842.2 280.0,850.0 C281.8,857.8 282.8,879.1 287.0,885.0 C291.2,890.9 313.4,896.0 315.0,899.0 C316.6,902.0 306.0,908.4 300.0,910.0 C294.0,911.6 271.4,912.6 265.0,912.0 C258.6,911.4 250.6,908.6 247.0,905.0 C243.4,901.4 237.6,888.6 235.0,882.0 C232.4,875.4 227.2,859.0 225.0,850.0 C222.8,841.0 218.3,816.0 217.0,807.0 C215.7,798.0 214.1,780.5 214.0,775.0 C213.9,769.5 214.4,763.5 216.0,761.0 Z" fill="#4e4a42" />
<path d="M216.0,761.0 C217.6,758.5 223.9,754.8 227.0,754.0 C230.1,753.2 239.0,752.7 242.0,754.0 C245.0,755.3 249.6,761.0 252.0,765.0 C254.4,769.0 259.6,780.4 262.0,787.0 C264.4,793.6 269.8,812.4 272.0,820.0 C274.2,827.6 278.2,842.2 280.0,850.0 C281.8,857.8 282.8,879.1 287.0,885.0 C291.2,890.9 313.4,896.0 315.0,899.0 C316.6,902.0 306.0,908.4 300.0,910.0 C294.0,911.6 271.4,912.6 265.0,912.0 C258.6,911.4 250.6,908.6 247.0,905.0 C243.4,901.4 237.6,888.6 235.0,882.0 C232.4,875.4 227.2,859.0 225.0,850.0 C222.8,841.0 218.3,816.0 217.0,807.0 C215.7,798.0 214.1,780.5 214.0,775.0 C213.9,769.5 214.4,763.5 216.0,761.0 Z" fill="url(#dk)" opacity="0.5"/>
<path d="M555.0,1000.0 C551.0,994.0 548.1,973.8 547.0,965.0 C545.9,956.2 545.6,935.4 546.0,927.0 C546.4,918.6 548.3,902.2 550.0,895.0 C551.7,887.8 557.0,872.4 560.0,867.0 C563.0,861.6 570.8,853.2 575.0,850.0 C579.2,846.8 589.6,840.7 595.0,840.0 C600.4,839.3 614.0,842.2 620.0,844.0 C626.0,845.8 639.0,851.3 645.0,855.0 C651.0,858.7 664.6,869.4 670.0,875.0 C675.4,880.6 685.8,894.2 690.0,902.0 C694.2,909.8 701.8,931.0 705.0,940.0 C708.2,949.0 714.4,968.0 717.0,977.0 C719.6,986.0 725.2,1006.0 727.0,1015.0 C728.8,1024.0 731.3,1044.0 732.0,1052.0 C732.7,1060.0 733.2,1074.8 733.0,1082.0 C732.8,1089.2 736.4,1107.4 730.0,1112.0 C723.6,1116.6 690.6,1119.4 680.0,1120.0 C669.4,1120.6 649.2,1118.8 642.0,1117.0 C634.8,1115.2 623.8,1108.2 620.0,1105.0 C616.2,1101.8 612.4,1094.2 610.0,1090.0 C607.6,1085.8 602.4,1076.0 600.0,1070.0 C597.6,1064.0 592.4,1046.6 590.0,1040.0 C587.6,1033.4 584.2,1019.8 580.0,1015.0 C575.8,1010.2 559.0,1006.0 555.0,1000.0 Z" fill="#4e4a42" />
<path d="M555.0,1000.0 C551.0,994.0 548.1,973.8 547.0,965.0 C545.9,956.2 545.6,935.4 546.0,927.0 C546.4,918.6 548.3,902.2 550.0,895.0 C551.7,887.8 557.0,872.4 560.0,867.0 C563.0,861.6 570.8,853.2 575.0,850.0 C579.2,846.8 589.6,840.7 595.0,840.0 C600.4,839.3 614.0,842.2 620.0,844.0 C626.0,845.8 639.0,851.3 645.0,855.0 C651.0,858.7 664.6,869.4 670.0,875.0 C675.4,880.6 685.8,894.2 690.0,902.0 C694.2,909.8 701.8,931.0 705.0,940.0 C708.2,949.0 714.4,968.0 717.0,977.0 C719.6,986.0 725.2,1006.0 727.0,1015.0 C728.8,1024.0 731.3,1044.0 732.0,1052.0 C732.7,1060.0 733.2,1074.8 733.0,1082.0 C732.8,1089.2 736.4,1107.4 730.0,1112.0 C723.6,1116.6 690.6,1119.4 680.0,1120.0 C669.4,1120.6 649.2,1118.8 642.0,1117.0 C634.8,1115.2 623.8,1108.2 620.0,1105.0 C616.2,1101.8 612.4,1094.2 610.0,1090.0 C607.6,1085.8 602.4,1076.0 600.0,1070.0 C597.6,1064.0 592.4,1046.6 590.0,1040.0 C587.6,1033.4 584.2,1019.8 580.0,1015.0 C575.8,1010.2 559.0,1006.0 555.0,1000.0 Z" fill="url(#dk)" opacity="0.5"/>
<ellipse cx="248" cy="836" rx="25" ry="69" fill="#4e4a42" transform="rotate(-7 248 836)"/>
<ellipse cx="248.5" cy="838" rx="21.5" ry="61" fill="none" stroke="#47545b" stroke-width="5" transform="rotate(-7 248.5 838)"/>
<ellipse cx="249" cy="840" rx="17" ry="53" fill="#a9b1a4" transform="rotate(-8 249 840)"/>
<ellipse cx="650" cy="985" rx="56" ry="121" fill="#47545b" transform="rotate(-7 650 985)"/>
<ellipse cx="638" cy="990" rx="50" ry="114" fill="#4e4a42" transform="rotate(-6 638 990)"/>
<ellipse cx="626" cy="993" rx="38" ry="100" fill="none" stroke="#47545b" stroke-width="8" transform="rotate(-5 627 994)"/>
<ellipse cx="624" cy="993" rx="32" ry="92" fill="#a9b1a4" transform="rotate(-5 625 994)"/>
<path d="M624.0,993.0 L653.8,1016.2 M624.0,993.0 L647.4,1060.9 M624.0,993.0 L632.0,1079.6 M624.0,993.0 L613.5,1065.3 M624.0,993.0 L599.1,1023.3 M624.0,993.0 L594.2,969.8 M624.0,993.0 L600.6,925.1 M624.0,993.0 L616.0,906.4 M624.0,993.0 L634.5,920.7 M624.0,993.0 L648.9,962.7" fill="none" stroke="#6f786d" stroke-width="2.8" stroke-linecap="round" stroke-linejoin="round" />
<path d="M249.0,840.0 L266.2,852.5 M249.0,840.0 L264.1,878.3 M249.0,840.0 L256.2,889.5 M249.0,840.0 L245.6,881.7 M249.0,840.0 L236.2,858.1 M249.0,840.0 L231.8,827.5 M249.0,840.0 L233.9,801.7 M249.0,840.0 L241.8,790.5 M249.0,840.0 L252.4,798.3 M249.0,840.0 L261.8,821.9" fill="none" stroke="#6f786d" stroke-width="2.0" stroke-linecap="round" stroke-linejoin="round" />
<ellipse cx="624" cy="993" rx="32" ry="92" fill="none" stroke="#8f988c" stroke-width="2.5" transform="rotate(-5 625 994)"/>
<ellipse cx="249" cy="840" rx="18" ry="54" fill="none" stroke="#8f988c" stroke-width="2" transform="rotate(-8 249 840)"/>
<path d="M221.0,659.0 C224.2,659.0 229.8,662.5 231.0,666.0 C232.2,669.5 230.7,675.8 228.0,680.0 C225.3,684.2 218.3,689.3 215.0,691.0 C211.7,692.7 209.2,692.3 208.0,690.0 C206.8,687.7 206.8,681.0 207.5,677.0 C208.2,673.0 209.8,669.0 212.0,666.0 C214.2,663.0 217.8,659.0 221.0,659.0 Z" fill="#b7453d" />
<ellipse cx="1012" cy="1002" rx="10.5" ry="19.5" fill="none" stroke="#8b63c4" stroke-width="4" transform="rotate(6 1012 1002)"/>
<path d="M1001,974 L1017,985 M1021,978 L1011,986" fill="none" stroke="#8b63c4" stroke-width="3.8" stroke-linecap="round" stroke-linejoin="round" />
<path d="M1090.0,1007.5 L1100.0,1007.5 L1107.0,1054.0 L1095.0,1054.0 Z" fill="#8b63c4" />
<path d="M1094.7,1057.0 L1107.9,1057.0 L1104.0,1085.0 L1100.7,1115.0 L1085.6,1115.0 L1090.0,1085.0 Z" fill="#8b63c4" />
</svg>
</body></html>
